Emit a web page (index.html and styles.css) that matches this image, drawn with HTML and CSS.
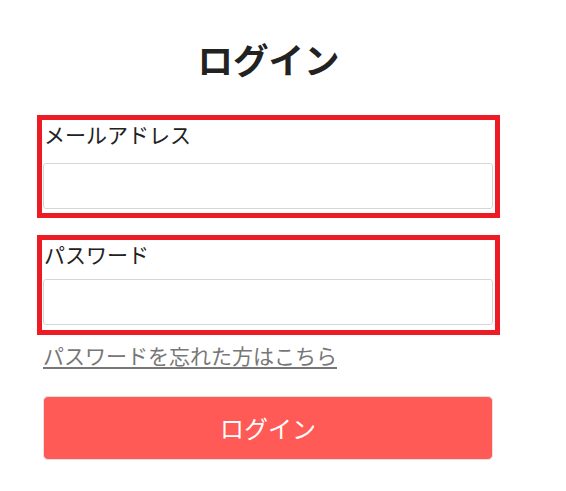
FILE: index.html
```html
<!DOCTYPE html>
<html lang="ja">
<head>
<meta charset="utf-8">
<title>ログイン</title>
<link rel="stylesheet" href="styles.css">
</head>
<body>
<main class="login">
  <h1 class="login-title">ログイン</h1>
  <form class="login-form">
    <div class="form-group form-group-email">
      <label class="form-label" for="email">メールアドレス</label>
      <input class="form-input" id="email" type="email">
    </div>
    <div class="form-group form-group-password">
      <label class="form-label" for="password">パスワード</label>
      <input class="form-input" id="password" type="password">
    </div>
    <a class="forgot-link" href="#">パスワードを忘れた方はこちら</a>
    <button class="login-button" type="button">ログイン</button>
  </form>
</main>
</body>
</html>
```

FILE: styles.css
```css
html, body {
  margin: 0;
  padding: 0;
  background: #ffffff;
}

body {
  font-family: "Noto Sans CJK JP", "Noto Sans", sans-serif;
  color: #222222;
}

.login {
  width: 453px;
  margin-left: 42px;
  padding-top: 38px;
}

.login-title {
  margin: 0 0 40px 0;
  font-size: 35.5px;
  line-height: 42px;
  font-weight: 700;
  text-align: center;
  color: #222222;
}

.login-form {
  display: flex;
  flex-direction: column;
}

.form-group {
  display: flex;
  flex-direction: column;
  padding: 0 0 4px 1px;
  outline: 5px solid #ed1c24;
}

.form-group-email {
  margin-bottom: 27px;
}

.form-group-email .form-label {
  margin-bottom: 15px;
}

.form-group-password {
  margin-bottom: 11px;
  padding-bottom: 5px;
}

.form-group-password .form-label {
  margin-bottom: 11px;
}

.form-label {
  font-size: 21px;
  line-height: 28px;
  margin-left: 1px;
  color: #222222;
}

.form-input {
  box-sizing: border-box;
  width: 450px;
  height: 46px;
  border: 1px solid #d6d6d6;
  border-radius: 3px;
  background: #ffffff;
  padding: 0 10px;
  font-size: 16px;
  font-family: inherit;
}

.forgot-link {
  align-self: flex-start;
  margin-left: 1px;
  font-size: 21px;
  line-height: 28px;
  color: #777777;
  text-decoration: underline;
  text-underline-offset: 3px;
}

.login-button {
  box-sizing: border-box;
  width: 450px;
  height: 64px;
  margin: 27px 0 0 1px;
  background: #ff5a55;
  border: 1px solid #e2e2e2;
  border-radius: 5px;
  color: #ffffff;
  font-family: inherit;
  font-size: 24px;
  line-height: 1;
}
```
